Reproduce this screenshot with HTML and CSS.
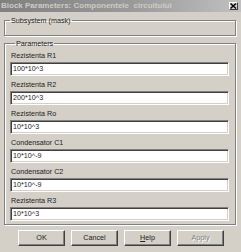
FILE: index.html
```html
<!DOCTYPE html>
<html>
<head>
<meta charset="utf-8">
<link rel="stylesheet" href="styles.css">
</head>
<body>
<div class="window">
  <div class="titlebar">
    <span class="title">Block Parameters: Componentele&nbsp; circuitului</span>
    <span class="close"><svg width="7" height="6" viewBox="0 0 7 6"><path d="M0.5 0.5 L6 5.5 M6 0.5 L0.5 5.5" stroke="#000" stroke-width="1.4"/></svg></span>
  </div>
  <fieldset class="group group-mask">
    <legend>Subsystem (mask)</legend>
    <div class="mask-body"></div>
  </fieldset>
  <fieldset class="group group-params">
    <legend>Parameters</legend>
    <div class="param"><label>Rezistenta R1</label><div class="edit">100*10^3</div></div>
    <div class="param"><label>Rezistenta R2</label><div class="edit">200*10^3</div></div>
    <div class="param"><label>Rezistenta Ro</label><div class="edit">10*10^3</div></div>
    <div class="param"><label>Condensator C1</label><div class="edit">10*10^-9</div></div>
    <div class="param"><label>Condensator C2</label><div class="edit">10*10^-9</div></div>
    <div class="param"><label>Rezistenta R3</label><div class="edit">10*10^3</div></div>
  </fieldset>
  <div class="buttons">
    <div class="btn">OK</div>
    <div class="btn">Cancel</div>
    <div class="btn"><u>H</u>elp</div>
    <div class="btn disabled">Apply</div>
  </div>
</div>
</body>
</html>
```
FILE: styles.css
```css
html, body {
  margin: 0;
  padding: 0;
  background: #d4d0c8;
}
.window {
  width: 241px;
  height: 252px;
  background: #d4d0c8;
  font-family: "Liberation Sans", Arial, sans-serif;
  font-size: 7.2px;
  color: #222;
  display: flex;
  flex-direction: column;
  overflow: hidden;
}
.titlebar {
  height: 12px;
  flex: none;
  display: flex;
  align-items: center;
  justify-content: space-between;
  padding: 0 3px 0 1px;
  background: linear-gradient(to right, #808080 0%, #9a9a9a 55%, #c0c0c0 100%);
}
.title {
  font-weight: bold;
  font-size: 8px;
  color: #cfcbc3;
  white-space: nowrap;
  line-height: 12px;
}
.close {
  width: 9px;
  height: 8px;
  box-sizing: border-box;
  background: #d4d0c8;
  border-top: 1px solid #fff;
  border-left: 1px solid #fff;
  border-right: 1px solid #404040;
  border-bottom: 1px solid #404040;
  display: flex;
  align-items: center;
  justify-content: center;
}
.close svg { display: block; }
.group {
  margin: 0 5px 0 4px;
  padding: 0;
  min-width: 0;
  border: 1px solid #808080;
  box-shadow: inset 1px 1px 0 #fff, 1px 1px 0 #fff;
}
.group legend {
  padding: 0 1px;
  margin-left: 5px;
  line-height: 11px;
  height: 11px;
}
.group-mask {
  margin-top: 3px;
}
.mask-body {
  height: 9px;
}
.group-params {
  margin-top: 2px;
  padding: 0 6px 3px 5px;
}
.param label {
  display: block;
  height: 13px;
  line-height: 13px;
  padding-left: 1px;
}
.param + .param label {
  margin-top: 2px;
}
.edit {
  height: 14px;
  box-sizing: border-box;
  background: #fff;
  border-top: 1px solid #808080;
  border-left: 1px solid #808080;
  border-right: 1px solid #fff;
  border-bottom: 1px solid #fff;
  box-shadow: inset 1px 1px 0 #404040, inset -1px -1px 0 #d4d0c8;
  padding-left: 2px;
  line-height: 12px;
  white-space: nowrap;
}
.buttons {
  margin-top: 5px;
  display: flex;
  justify-content: center;
  gap: 6px;
  padding-left: 1px;
}
.btn {
  width: 47px;
  height: 16px;
  box-sizing: border-box;
  border-top: 1px solid #fff;
  border-left: 1px solid #fff;
  border-right: 1px solid #404040;
  border-bottom: 1px solid #404040;
  box-shadow: inset -1px -1px 0 #808080;
  display: flex;
  align-items: center;
  justify-content: center;
  line-height: 12px;
}
.btn.disabled {
  color: #808080;
  text-shadow: 1px 1px 0 #fff;
}
```
